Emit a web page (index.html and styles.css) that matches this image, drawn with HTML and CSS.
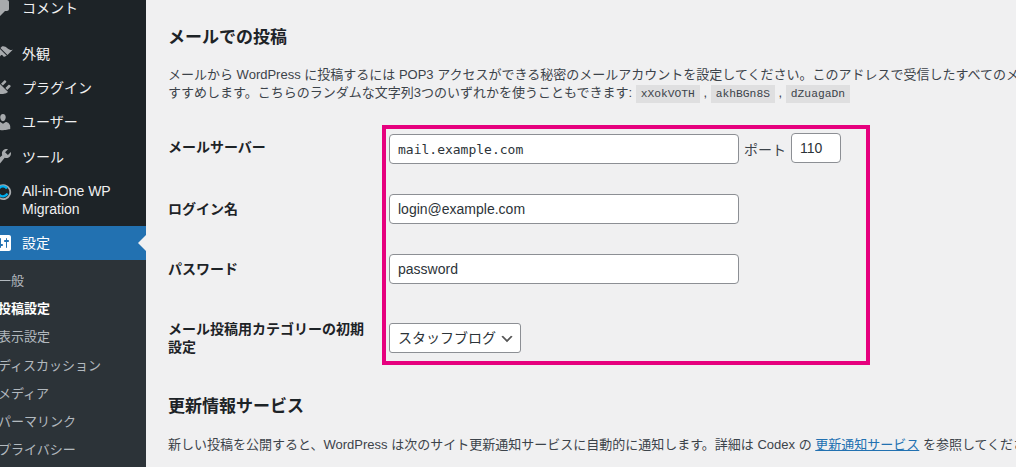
FILE: index.html
```html
<!DOCTYPE html>
<html lang="ja">
<head>
    <meta charset="UTF-8">
    <meta name="viewport" content="width=device-width, initial-scale=1.0">
    <title>投稿設定</title>
    <link rel="stylesheet" href="styles.css">
</head>
<body>
    <div class="wrap">
        <div class="sidebar">
            <a class="menu-item menu-gap"><svg class="icon" viewBox="0 0 20 20"><path d="M5 2h9c1.1 0 2 .9 2 2v7c0 1.1-.9 2-2 2h-2l-5 5v-5H5c-1.1 0-2-.9-2-2V4c0-1.1.9-2 2-2z"/></svg>コメント</a>
            <a class="menu-item"><svg class="icon" viewBox="0 0 20 20"><path d="M14.48 11.06L7.41 3.99l1.5-1.5c.5-.56 2.3-.47 3.51.32 1.21.8 1.43 1.28 2.91 2.1 1.18.64 2.45 1.26 4.45.85zm-.71.71L6.7 4.7 4.93 6.47c-.39.39-.39 1.02 0 1.41l1.06 1.06c.39.39.39 1.03 0 1.42-.6.6-1.43 1.11-2.21 1.69-.35.26-.7.53-1.01.84C1.43 13.23.5 15.04 1.4 15.94c.9.9 2.71-.03 4.05-1.37.31-.31.58-.66.84-1.01.58-.78 1.09-1.61 1.69-2.21.39-.39 1.03-.39 1.42 0l1.06 1.06c.39.39 1.02.39 1.41 0z"/></svg>外観</a>
            <a class="menu-item"><svg class="icon" viewBox="0 0 20 20"><path d="M13.11 4.36L9.87 7.6 8 5.73l3.24-3.24c.35-.34 1.05-.2 1.56.32.52.51.66 1.21.31 1.55zm-8 1.77l.91-1.12 9.01 9.01-1.19.84c-.71.71-2.63 1.16-3.82 1.16H6.14L4.9 17.26c-.59.59-1.54.59-2.12 0-.59-.58-.59-1.53 0-2.12l1.24-1.24v-3.88c0-1.13.4-3.19 1.09-3.89zm7.26 3.97l3.24-3.24c.34-.35 1.04-.21 1.55.31.52.51.66 1.21.31 1.55l-3.24 3.25z"/></svg>プラグイン</a>
            <a class="menu-item"><svg class="icon" viewBox="0 0 20 20"><path d="M10 9.25c-2.27 0-2.73-3.44-2.73-3.44C7 4.02 7.82 2 9.97 2c2.16 0 2.98 2.02 2.71 3.81 0 0-.41 3.44-2.68 3.44zm0 2.57L12.72 10c2.39 0 4.52 2.33 4.52 4.53v2.49s-3.65 1.13-7.24 1.13c-3.65 0-7.24-1.13-7.24-1.13v-2.49c0-2.25 1.94-4.48 4.47-4.48z"/></svg>ユーザー</a>
            <a class="menu-item menu-tools"><svg class="icon" viewBox="0 0 20 20"><path d="M16.68 9.77c-1.34 1.34-3.3 1.67-4.95.99l-5.41 6.52c-.99.99-2.59.99-3.58 0s-.99-2.59 0-3.57l6.52-5.42c-.68-1.65-.35-3.61.99-4.95 1.28-1.28 3.12-1.62 4.72-1.06l-2.89 2.89 2.82 2.82 2.86-2.87c.53 1.58.18 3.39-1.08 4.65zM3.81 16.21c.4.39 1.04.39 1.43 0 .4-.4.4-1.04 0-1.43-.39-.4-1.03-.4-1.43 0-.39.39-.39 1.03 0 1.43z"/></svg>ツール</a>
            <a class="menu-item"><svg class="icon" viewBox="0 0 20 20"><path class="aio-grey" d="M3 4l3.4 1.2A7 7 0 1 1 3.5 13" fill="none" stroke-width="1.8"/><path class="aio-blue" d="M14 7.5a5 5 0 1 0 .4 5" fill="none" stroke-width="2.4"/></svg><span>All-in-One WP Migration</span></a>
            <a class="menu-item menu-current"><svg class="icon" viewBox="0 0 20 20"><path d="M18 16V4c0-1.1-.9-2-2-2H4c-1.1 0-2 .9-2 2v12c0 1.1.9 2 2 2h12c1.1 0 2-.9 2-2zM8 11h1c.55 0 1 .45 1 1s-.45 1-1 1H8v1.5c0 .28-.22.5-.5.5s-.5-.22-.5-.5V13H6c-.55 0-1-.45-1-1s.45-1 1-1h1V5.5c0-.28.22-.5.5-.5s.5.22.5.5V11zm5-2h-1c-.55 0-1-.45-1-1s.45-1 1-1h1V5.5c0-.28.22-.5.5-.5s.5.22.5.5V7h1c.55 0 1 .45 1 1s-.45 1-1 1h-1v5.5c0 .28-.22.5-.5.5s-.5-.22-.5-.5V9z"/></svg>設定</a>
            <div class="submenu">
                <a>一般</a>
                <a class="sub-current">投稿設定</a>
                <a>表示設定</a>
                <a>ディスカッション</a>
                <a>メディア</a>
                <a>パーマリンク</a>
                <a>プライバシー</a>
            </div>
        </div>

        <div class="content">
            <h2 class="section-title">メールでの投稿</h2>
            <p class="section-text">メールから WordPress に投稿するには POP3 アクセスができる秘密のメールアカウントを設定してください。このアドレスで受信したすべてのメールがサイトに投稿されるので、このアドレスは秘密にしておくことを強くお<br>すすめします。こちらのランダムな文字列3つのいずれかを使うこともできます: <code>xXokVOTH</code> , <code>akhBGn8S</code> , <code>dZuagaDn</code></p>

            <form class="mail-form">
                <div class="form-row row-server">
                    <label class="form-label">メールサーバー</label>
                    <input class="field code-field" type="text" value="mail.example.com">
                    <label class="port-label">ポート</label>
                    <input class="field port-field" type="text" value="110">
                </div>
                <div class="form-row">
                    <label class="form-label">ログイン名</label>
                    <input class="field" type="text" value="login@example.com">
                </div>
                <div class="form-row">
                    <label class="form-label">パスワード</label>
                    <input class="field" type="text" value="password">
                </div>
                <div class="form-row row-category">
                    <label class="form-label">メール投稿用カテゴリーの初期設定</label>
                    <select class="select-field"><option>スタッフブログ</option></select>
                </div>
                <div class="highlight-box"></div>
            </form>

            <h2 class="section-title title-update">更新情報サービス</h2>
            <p class="section-text text-update">新しい投稿を公開すると、WordPress は次のサイト更新通知サービスに自動的に通知します。詳細は Codex の <a href="#" class="text-link">更新通知サービス</a> を参照してください。複数のサービスの URL を入力する場合は改行で区切ります。</p>
            <textarea class="ping-list" rows="3"></textarea>
        </div>
    </div>
</body>
</html>
```

FILE: styles.css
```css
html, body {
    margin: 0;
    height: 467px;
    overflow: hidden;
    background-color: #f0f0f1;
}
body {
    font-family: "Liberation Sans", "Noto Sans CJK JP", sans-serif;
    font-size: 13px;
    color: #3c434a;
}
/* the screenshot is scrolled a little to the right and down */
.wrap {
    display: flex;
    margin: -9px 0 0 -14px;
}
.sidebar {
    width: 160px;
    flex-shrink: 0;
    background-color: #1d2327;
    height: 490px;
}
.menu-item {
    display: flex;
    position: relative;
    padding: 8px 8px 8px 36px;
    font-size: 14px;
    line-height: 18px;
    color: #f0f0f1;
}
.menu-gap {
    margin-bottom: 12px;
}
.menu-tools {
    margin-top: 1px;
}
.icon {
    position: absolute;
    left: 7px;
    top: 7px;
    width: 20px;
    height: 20px;
    fill: #a7aaad;
}
.aio-grey {
    stroke: #a7aaad;
}
.aio-blue {
    stroke: #00aeef;
}
.menu-current {
    background-color: #2271b1;
    color: #fff;
}
.menu-current .icon {
    fill: #fff;
}
.menu-current::after {
    content: "";
    position: absolute;
    right: 0;
    top: 9px;
    border: 8px solid transparent;
    border-right-color: #f0f0f1;
}
.submenu {
    background-color: #2c3338;
    padding: 7px 0;
}
.submenu a {
    display: block;
    padding: 5px 12px;
    font-size: 13px;
    line-height: 18.2px;
    color: rgba(240, 246, 252, 0.7);
}
.submenu .sub-current {
    color: #fff;
    font-weight: bold;
}
.content {
    padding: 35px 0 0 22px;
    width: 1000px;
    flex-shrink: 0;
}
.section-title {
    margin: 0;
    font-size: 17px;
    line-height: 24px;
    color: #1d2327;
}
.section-text {
    margin: 16px 0 0;
    line-height: 18px;
    white-space: nowrap;
}
code {
    padding: 3px 5px;
    background-color: rgba(0, 0, 0, 0.07);
    font-family: "Liberation Mono", monospace;
    font-size: 11.3px;
}
.mail-form {
    position: relative;
    margin-top: 31px;
}
.form-row {
    display: flex;
    align-items: center;
    margin-bottom: 30px;
}
.form-label {
    width: 221px;
    flex-shrink: 0;
    font-size: 14px;
    font-weight: bold;
    line-height: 18px;
    color: #1d2327;
    box-sizing: border-box;
    padding-right: 20px;
}
.row-server .form-label {
    margin-top: -4px;
}
.row-category {
    margin: 36px 0 0;
}
.field {
    width: 350px;
    height: 30px;
    box-sizing: border-box;
    padding: 0 8px;
    border: 1px solid #8c8f94;
    border-radius: 4px;
    background-color: #fff;
    font-family: "Liberation Sans", "Noto Sans CJK JP", sans-serif;
    font-size: 14px;
    color: #2c3338;
}
.code-field {
    font-family: "DejaVu Sans Mono", monospace;
    font-size: 13px;
}
.port-label {
    margin: 0 5px;
    font-size: 14px;
}
.port-field {
    width: 50px;
    margin-top: -2px;
}
.select-field {
    appearance: none;
    width: 132px;
    height: 30px;
    padding: 0 24px 0 8px;
    border: 1px solid #8c8f94;
    border-radius: 3px;
    background: #fff url("data:image/svg+xml,%3Csvg xmlns='http://www.w3.org/2000/svg' width='20' height='20'%3E%3Cpath d='M5 6l5 5 5-5 2 1-7 7-7-7z' fill='%23555'/%3E%3C/svg%3E") no-repeat right 5px top 55%;
    background-size: 16px 16px;
    font-family: "Liberation Sans", "Noto Sans CJK JP", sans-serif;
    font-size: 14px;
    color: #2c3338;
}
.highlight-box {
    position: absolute;
    left: 214px;
    top: -9px;
    width: 488px;
    height: 240px;
    box-sizing: border-box;
    border: 4px solid #e6007e;
}
.title-update {
    margin-top: 39px;
}
.text-update {
    margin-top: 17px;
}
.text-link {
    color: #2271b1;
}
.ping-list {
    display: block;
    width: 900px;
    margin-top: 14px;
    box-sizing: border-box;
    border: 1px solid #8c8f94;
    border-radius: 4px;
    background-color: #fff;
}
```
